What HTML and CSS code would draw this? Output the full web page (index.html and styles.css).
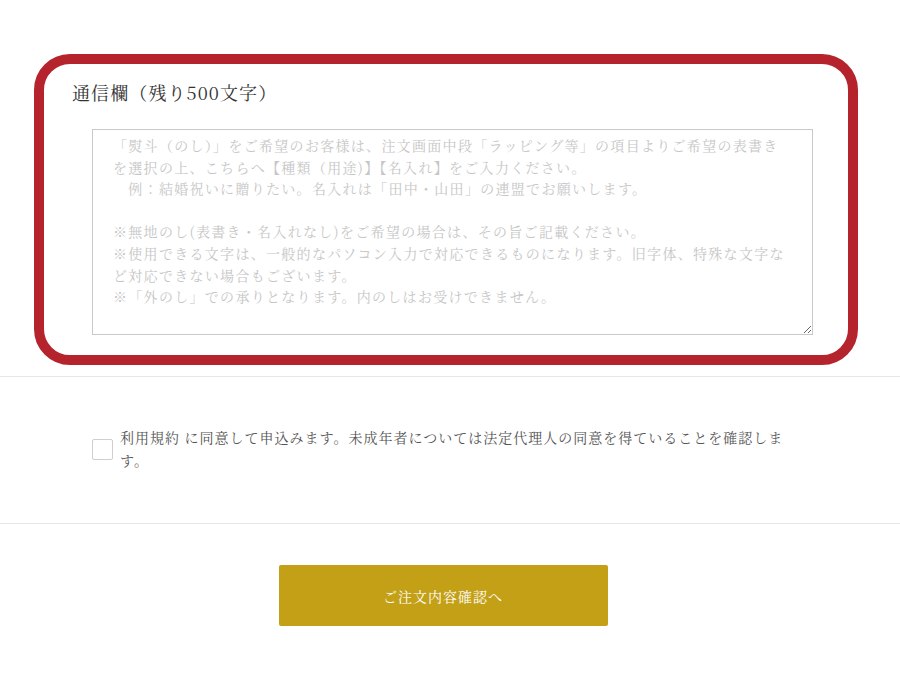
FILE: index.html
```html
<!DOCTYPE html>
<html lang="ja">
<head>
    <meta charset="UTF-8">
    <meta name="viewport" content="width=device-width, initial-scale=1.0">
    <title>ご注文手続き</title>
    <link rel="stylesheet" href="styles.css">
</head>
<body>
    <div class="order">
        <section class="note-box">
            <label class="note-title" for="note">通信欄（残り500文字）</label>
            <textarea id="note" class="note-input" placeholder="「熨斗（のし）」をご希望のお客様は、注文画面中段「ラッピング等」の項目よりご希望の表書きを選択の上、こちらへ【種類（用途)】【名入れ】をご入力ください。&#10;　例：結婚祝いに贈りたい。名入れは「田中・山田」の連盟でお願いします。&#10;&#10;※無地のし(表書き・名入れなし)をご希望の場合は、その旨ご記載ください。&#10;※使用できる文字は、一般的なパソコン入力で対応できるものになります。旧字体、特殊な文字など対応できない場合もございます。&#10;※「外のし」での承りとなります。内のしはお受けできません。"></textarea>
        </section>

        <div class="agree">
            <input type="checkbox" id="agree" class="agree-check">
            <label for="agree" class="agree-text">利用規約 に同意して申込みます。未成年者については法定代理人の同意を得ていることを確認します。</label>
        </div>

        <div class="submit-row">
            <button type="submit" class="submit-btn">ご注文内容確認へ</button>
        </div>
    </div>
</body>
</html>
```

FILE: styles.css
```css
body {
    margin: 0;
    font-family: "Noto Serif CJK JP", "Liberation Serif", "Noto Sans CJK JP", serif;
    color: #333;
    background: #fff;
}

.order {
    width: 900px;
    padding-top: 54px;
}

.note-box {
    display: flex;
    flex-direction: column;
    align-items: flex-start;
    width: 824px;
    margin-left: 34px;
    padding: 16px 34px 20px 28px;
    box-sizing: border-box;
    border: 10px solid #b5232d;
    border-radius: 36px;
}

.note-title {
    font-size: 18px;
    letter-spacing: 1.1px;
    line-height: 24px;
    color: #333;
}

.note-input {
    width: 721px;
    height: 206px;
    margin: 25px 0 0 20px;
    padding: 5px 20px;
    box-sizing: border-box;
    border: 1px solid #c9c9c9;
    border-radius: 0;
    font-family: inherit;
    font-size: 14px;
    letter-spacing: 1.3px;
    line-height: 21.6px;
    color: #333;
}

.note-input::placeholder {
    color: #c6c6c6;
}

.agree {
    display: flex;
    align-items: center;
    gap: 7px;
    margin-top: 11px;
    padding: 49px 110px 51px 92px;
    border-top: 1px solid #e6e6e6;
    border-bottom: 1px solid #e6e6e6;
}

.agree-check {
    appearance: none;
    flex: none;
    width: 21px;
    height: 21px;
    margin: 0;
    border: 1px solid #cfcfcf;
    border-radius: 2px;
    background: #fff;
}

.agree-text {
    font-size: 14px;
    letter-spacing: 1px;
    line-height: 23px;
    color: #555;
}

.submit-row {
    display: flex;
    justify-content: center;
    padding-top: 41px;
}

.submit-btn {
    width: 329px;
    height: 61px;
    margin-left: -14px;
    border: none;
    border-radius: 2px;
    background-color: #c3a016;
    color: #fff;
    font-family: inherit;
    font-size: 14px;
    letter-spacing: 1px;
    cursor: pointer;
}
```
